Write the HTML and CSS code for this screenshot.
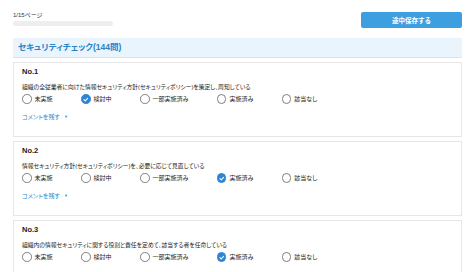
FILE: index.html
```html
<!DOCTYPE html>
<html lang="ja">
<head>
<meta charset="utf-8">
<link rel="stylesheet" href="styles.css">
</head>
<body>
<div class="page">
  <div class="topbar">
    <div class="progress">
      <div class="progress-label">1/15ページ</div>
      <div class="progress-track"><div class="progress-fill" style="width:0%"></div></div>
    </div>
    <button class="save-btn">途中保存する</button>
  </div>

  <div class="section-head">セキュリティチェック(144問)</div>

  <div class="card">
    <div class="q-no">No.1</div>
    <div class="q-text">組織の全従業者に向けた情報セキュリティ方針(セキュリティポリシー)を策定し、周知している</div>
    <div class="choices">
      <label class="choice"><span class="radio"></span>未実施</label>
      <label class="choice"><span class="radio checked"><svg viewBox="0 0 10 10"><path d="M2.6 5.1 L4.3 6.8 L7.5 3.5" /></svg></span>検討中</label>
      <label class="choice"><span class="radio"></span>一部実施済み</label>
      <label class="choice"><span class="radio"></span>実施済み</label>
      <label class="choice"><span class="radio"></span>該当なし</label>
    </div>
    <div class="comment">コメントを残す<span class="caret">▼</span></div>
  </div>

  <div class="card">
    <div class="q-no">No.2</div>
    <div class="q-text">情報セキュリティ方針(セキュリティポリシー)を、必要に応じて見直している</div>
    <div class="choices">
      <label class="choice"><span class="radio"></span>未実施</label>
      <label class="choice"><span class="radio"></span>検討中</label>
      <label class="choice"><span class="radio"></span>一部実施済み</label>
      <label class="choice"><span class="radio checked"><svg viewBox="0 0 10 10"><path d="M2.6 5.1 L4.3 6.8 L7.5 3.5" /></svg></span>実施済み</label>
      <label class="choice"><span class="radio"></span>該当なし</label>
    </div>
    <div class="comment">コメントを残す<span class="caret">▼</span></div>
  </div>

  <div class="card">
    <div class="q-no">No.3</div>
    <div class="q-text">組織内の情報セキュリティに関する役割と責任を定めて、該当する者を任命している</div>
    <div class="choices">
      <label class="choice"><span class="radio"></span>未実施</label>
      <label class="choice"><span class="radio"></span>検討中</label>
      <label class="choice"><span class="radio"></span>一部実施済み</label>
      <label class="choice"><span class="radio checked"><svg viewBox="0 0 10 10"><path d="M2.6 5.1 L4.3 6.8 L7.5 3.5" /></svg></span>実施済み</label>
      <label class="choice"><span class="radio"></span>該当なし</label>
    </div>
  </div>
</div>
</body>
</html>
```

FILE: styles.css
```css
html, body {
  margin: 0;
  padding: 0;
  background: #ffffff;
  overflow: hidden;
}
body {
  font-family: "Liberation Sans", "Noto Sans CJK JP", sans-serif;
  color: #222222;
}
.page {
  padding: 0 12px 0 13px;
}
.topbar {
  display: flex;
  justify-content: space-between;
  align-items: flex-start;
}
.progress {
  padding-top: 12px;
}
.progress-label {
  font-size: 6px;
  line-height: 7px;
  color: #333333;
  font-feature-settings: "palt";
}
.progress-track {
  margin-top: 2px;
  width: 100px;
  height: 5px;
  border-radius: 3px;
  background: #eeeeee;
  overflow: hidden;
}
.progress-fill {
  height: 100%;
  background: #3b9bdc;
}
.save-btn {
  margin-top: 12px;
  width: 101px;
  height: 16px;
  padding: 0;
  border: none;
  border-radius: 2px;
  background: #3d9fe0;
  color: #ffffff;
  font-family: "Noto Sans CJK JP", sans-serif;
  font-size: 6.5px;
  font-weight: 700;
}
.section-head {
  margin-top: 10px;
  height: 20px;
  box-sizing: border-box;
  padding-left: 5px;
  background: #e9f4fc;
  border-bottom: 1px solid #d6e6f1;
  color: #2a84c6;
  font-size: 8.5px;
  font-weight: 700;
  line-height: 19px;
  font-feature-settings: "palt";
}
.card {
  margin-top: 4px;
  border: 1px solid #e6e6e6;
  background: #ffffff;
  padding: 4px 9px 14px 8px;
}
.q-no {
  font-size: 7.5px;
  font-weight: 700;
  line-height: 10px;
  color: #222222;
}
.q-text {
  margin-top: 5px;
  font-size: 5.8px;
  line-height: 10px;
  color: #222222;
  font-feature-settings: "palt";
  white-space: nowrap;
}
.choices {
  margin-top: 2px;
  display: flex;
  gap: 28.5px;
  height: 10px;
  align-items: center;
}
.choice {
  display: flex;
  align-items: center;
  gap: 3px;
  font-size: 6px;
  line-height: 10px;
  color: #1a1a1a;
  font-feature-settings: "palt";
}
.radio {
  width: 9.5px;
  height: 9.5px;
  box-sizing: border-box;
  border: 1px solid #7d7d7d;
  border-radius: 50%;
  background: #ffffff;
  display: flex;
  align-items: center;
  justify-content: center;
}
.radio.checked {
  border-color: #2e84d6;
  background: #2e84d6;
}
.radio svg {
  width: 9px;
  height: 9px;
}
.radio svg path {
  fill: none;
  stroke: #ffffff;
  stroke-width: 1.4;
  stroke-linecap: round;
  stroke-linejoin: round;
}
.comment {
  margin-top: 8px;
  font-size: 6px;
  line-height: 10px;
  color: #2b8ad0;
  font-feature-settings: "palt";
}
.caret {
  margin-left: 4px;
  font-size: 4px;
  vertical-align: 1px;
}
```
